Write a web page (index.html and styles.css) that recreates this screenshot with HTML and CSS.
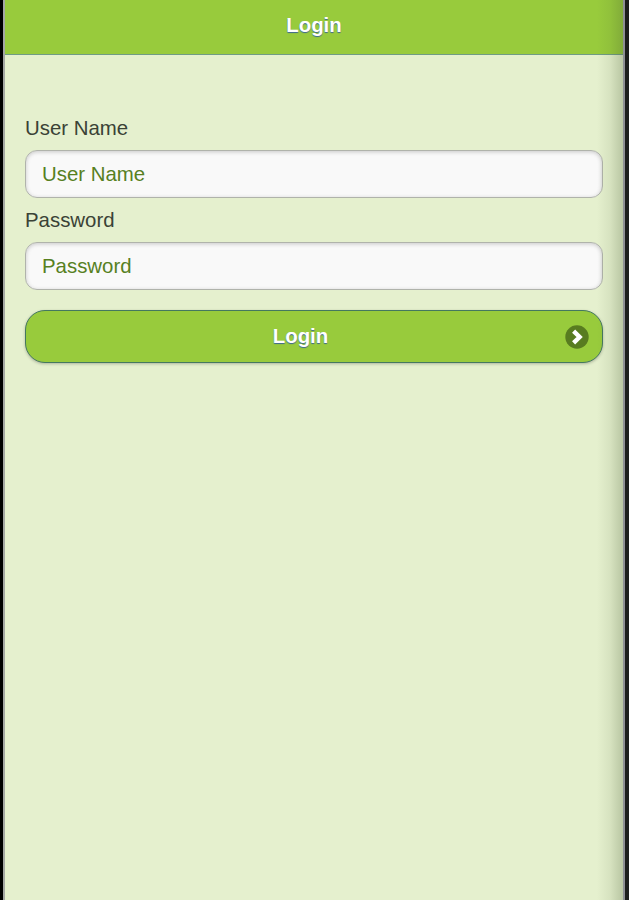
FILE: index.html
```
<!DOCTYPE html>
<html lang="en">
  <head>
    <meta charset="UTF-8" />
    <meta name="viewport" content="width=device-width, initial-scale=1.0" />
    <title>Login</title>
    <link rel="stylesheet" href="styles.css">
  </head>
  <body>
    <div class="page">
      <div class="header">
        <h1>Login</h1>
      </div>

      <form class="content">
        <label for="username">User Name</label>
        <input type="text" id="username" placeholder="User Name" />

        <label for="password">Password</label>
        <input type="password" id="password" placeholder="Password" />

        <button type="button">
          <span class="btn-text">Login</span>
          <svg class="icon" viewBox="0 0 24 24">
            <circle cx="12" cy="12" r="11.7" fill="#587c20" />
            <path d="M8.6 6.2 L14.6 12 L8.6 17.8" fill="none" stroke="#fff" stroke-width="4.4" />
          </svg>
        </button>
      </form>
    </div>
  </body>
</html>
```

FILE: styles.css
```
* {
  box-sizing: border-box;
}
body {
  margin: 0;
  padding: 0 4px 0 3px;
  background-color: #000;
  background-image: linear-gradient(to left, #1c1e1c 4px, #000 4px);
  font-family: "Liberation Sans", Arial, sans-serif;
  font-size: 20.4px;
  color: #3a4236;
}
.page {
  position: relative;
  height: 100vh;
  border-left: 2px solid #a5a8a4;
  border-right: 2px solid #8e9094;
  background-color: #e5f0ce;
}
/* Shade along the right edge of the page */
.page::after {
  content: "";
  position: absolute;
  top: 0;
  right: 0;
  bottom: 0;
  width: 26px;
  background: linear-gradient(to right, rgba(70, 90, 50, 0), rgba(70, 90, 50, 0.09) 50%, rgba(70, 90, 50, 0.28));
  pointer-events: none;
}
.header {
  height: 55px;
  padding-top: 13px;
  background-color: #98cb3c;
  border-bottom: 1px solid #6f9c84;
  text-align: center;
}
.header h1 {
  margin: 0;
  font-size: 20.4px;
  line-height: 24px;
  color: #fff;
  text-shadow: 0 1px 1px #3e6790;
}
.content {
  padding: 61px 20px 0 20px;
}
label {
  display: block;
  height: 34px;
  line-height: 24px;
}
input {
  display: block;
  width: 100%;
  height: 48px;
  margin-bottom: 10px;
  padding: 0 16px;
  font-family: inherit;
  font-size: inherit;
  background-color: #f9f9f9;
  border: 1px solid #b0b3ab;
  border-radius: 12px;
  box-shadow: inset 0 1px 4px rgba(0, 0, 0, 0.2);
}
input::placeholder {
  color: #57801f;
  opacity: 1;
}
button {
  display: flex;
  align-items: center;
  width: 100%;
  height: 53px;
  margin-top: 20px;
  padding: 0 13px 0 10px;
  font-family: inherit;
  font-size: inherit;
  font-weight: bold;
  color: #fff;
  text-shadow: 0 1px 1px #3e6790;
  background-color: #98cb3c;
  border: 1px solid #44785f;
  border-radius: 20px;
  box-shadow: 0 1px 3px rgba(0, 0, 0, 0.25);
}
.btn-text {
  flex: 1;
}
.icon {
  width: 24px;
  height: 24px;
}
```
